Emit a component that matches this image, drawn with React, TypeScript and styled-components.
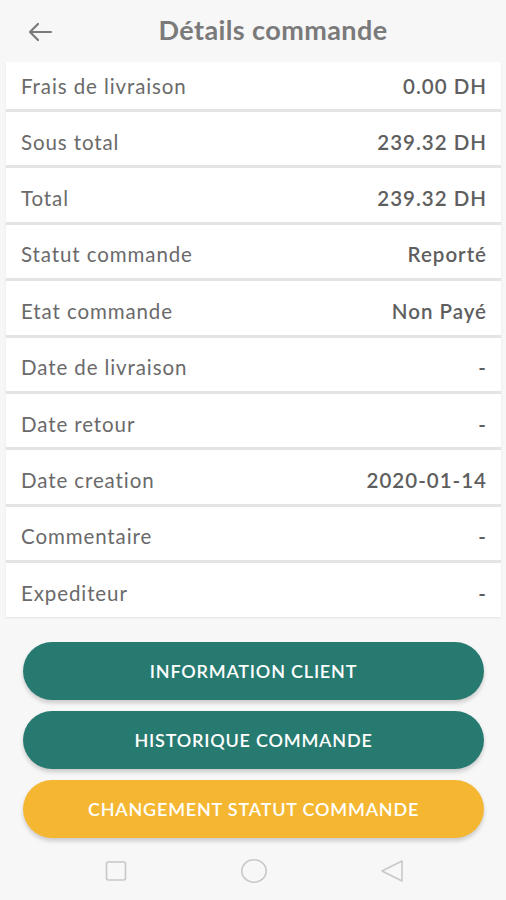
import React from 'react';
import styled, { createGlobalStyle } from 'styled-components';

const Global = createGlobalStyle`
  html, body {
    margin: 0;
    padding: 0;
    background: #f7f7f7;
    font-family: Lato, "Open Sans", sans-serif;
  }
`;

const rows: [string, string][] = [
  ['Frais de livraison', '0.00 DH'],
  ['Sous total', '239.32 DH'],
  ['Total', '239.32 DH'],
  ['Statut commande', 'Reporté'],
  ['Etat commande', 'Non Payé'],
  ['Date de livraison', '-'],
  ['Date retour', '-'],
  ['Date creation', '2020-01-14'],
  ['Commentaire', '-'],
  ['Expediteur', '-'],
];

export default function App() {
  return (
    <Page>
      <Global />
      <Header>
        <Back>
          <svg width="26" height="22" viewBox="0 0 26 22" fill="none" stroke="#7a7a7a" strokeWidth="2.2" strokeLinecap="round" strokeLinejoin="round">
            <path d="M24 11H3M11 3L3 11l8 8" />
          </svg>
        </Back>
        <Title>Détails commande</Title>
      </Header>
      <List>
        {rows.map(([label, value]) => (
          <Row key={label}>
            <Label>{label}</Label>
            <Value>{value}</Value>
          </Row>
        ))}
      </List>
      <Actions>
        <Button>INFORMATION CLIENT</Button>
        <Button>HISTORIQUE COMMANDE</Button>
        <Button $accent>CHANGEMENT STATUT COMMANDE</Button>
      </Actions>
      <NavBar>
        <svg width="22" height="20" viewBox="0 0 22 20" fill="none" stroke="#c8c8c8" strokeWidth="1.6">
          <rect x="1.5" y="1" width="19" height="18" rx="2" />
        </svg>
        <svg width="28" height="26" viewBox="0 0 28 26" fill="none" stroke="#c8c8c8" strokeWidth="1.6">
          <ellipse cx="14" cy="13" rx="12.2" ry="11.2" />
        </svg>
        <svg width="24" height="24" viewBox="0 0 24 24" fill="none" stroke="#c8c8c8" strokeWidth="1.6" strokeLinejoin="round">
          <path d="M22 2v20L2 12z" />
        </svg>
      </NavBar>
    </Page>
  );
}

const Page = styled.div`
  width: 506px;
  height: 900px;
  background: #f7f7f7;
  display: flex;
  flex-direction: column;
  overflow: hidden;
  & > * {
    flex-shrink: 0;
  }
`;

const Header = styled.div`
  position: relative;
  height: 62px;
  display: flex;
  align-items: center;
  justify-content: center;
  padding-bottom: 4px;
  box-sizing: border-box;
`;

const Back = styled.div`
  position: absolute;
  left: 27px;
  top: 21px;
  display: flex;
`;

const Title = styled.h1`
  margin: 0 0 0 40px;
  font-size: 27px;
  font-weight: 700;
  color: #7a7a7a;
  letter-spacing: 0.4px;
`;

const List = styled.div`
  margin: 0 5px 0 6px;
  display: flex;
  flex-direction: column;
  gap: 3px;
  background: #e4e4e4;
  box-shadow: 0 1px 2px rgba(0, 0, 0, 0.08);
`;

const Row = styled.div`
  background: #fff;
  height: 53.4px;
  display: flex;
  align-items: center;
  justify-content: space-between;
  padding: 6px 14px 0 15px;
  box-sizing: border-box;
  &:first-child {
    height: 47px;
    padding-top: 0;
  }
`;

const Label = styled.span`
  font-size: 20.5px;
  color: #6a6a6a;
  letter-spacing: 0.9px;
`;

const Value = styled.span`
  font-size: 20.5px;
  font-weight: 600;
  color: #5e5e5e;
  letter-spacing: 1px;
`;

const Actions = styled.div`
  display: flex;
  flex-direction: column;
  gap: 11px;
  padding: 25px 22px 0 23px;
`;

const Button = styled.button<{ $accent?: boolean }>`
  height: 58px;
  border: none;
  border-radius: 29px;
  background: ${(p) => (p.$accent ? '#f5b731' : '#277a70')};
  color: #fff;
  font-family: Lato, sans-serif;
  font-size: 18px;
  font-weight: 600;
  letter-spacing: 0.8px;
  box-shadow: 0 3px 4px rgba(0, 0, 0, 0.18);
`;

const NavBar = styled.div`
  margin-top: 5px;
  height: 56px;
  display: flex;
  align-items: center;
  justify-content: space-between;
  padding: 0 102px 0 105px;
`;
